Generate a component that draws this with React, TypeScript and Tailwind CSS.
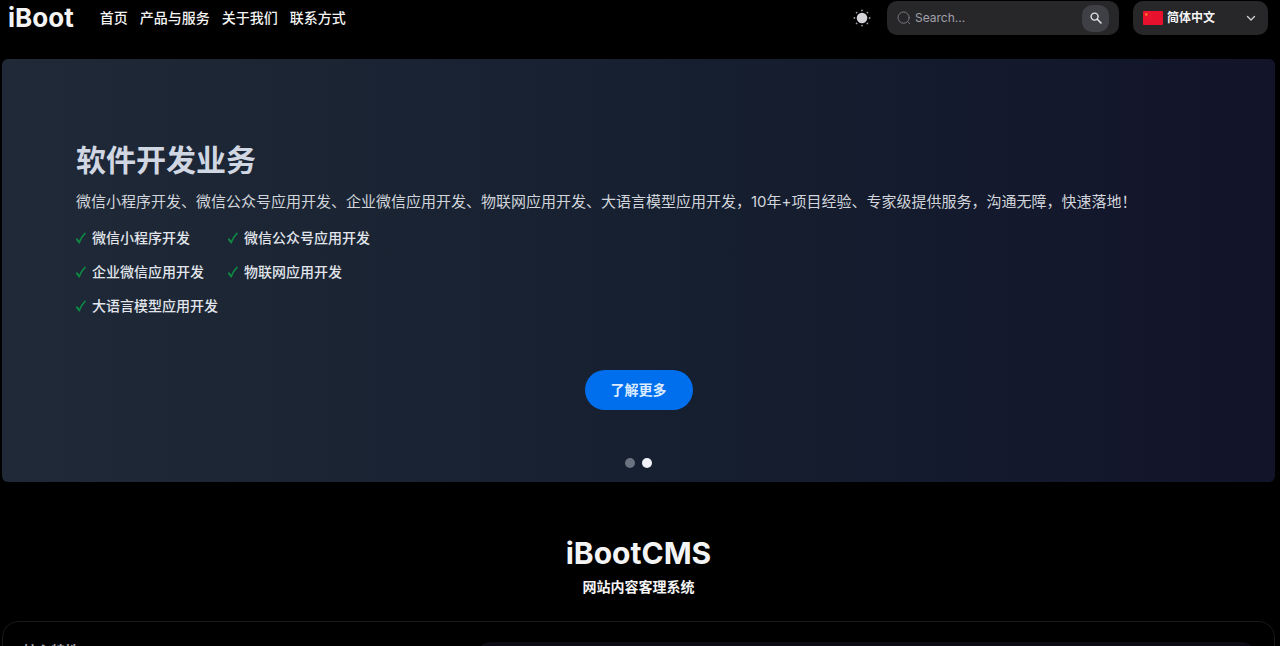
import React from "react";

const navItems = ["首页", "产品与服务", "关于我们", "联系方式"];

const services = [
  "微信小程序开发",
  "微信公众号应用开发",
  "企业微信应用开发",
  "物联网应用开发",
  "大语言模型应用开发",
];

function SunIcon() {
  return (
    <svg viewBox="0 0 18 18" className="size-[18px]" aria-hidden="true">
      <circle cx="9" cy="9" r="5.3" fill="#d4d4d8" />
      <g fill="#9c9ca3">
        <circle cx="9" cy="1.4" r="0.9" />
        <circle cx="9" cy="16.6" r="0.9" />
        <circle cx="1.4" cy="9" r="0.9" />
        <circle cx="16.6" cy="9" r="0.9" />
        <circle cx="3.6" cy="3.6" r="0.9" />
        <circle cx="14.4" cy="3.6" r="0.9" />
        <circle cx="3.6" cy="14.4" r="0.9" />
        <circle cx="14.4" cy="14.4" r="0.9" />
      </g>
    </svg>
  );
}

function OutlineSearchIcon() {
  return (
    <svg viewBox="0 0 14 14" className="size-[14px] shrink-0" fill="none" stroke="#77777f" strokeLinecap="round" aria-hidden="true">
      <circle cx="6.6" cy="6.6" r="5.6" />
      <path d="M11.4 11.4 12.6 12.6" />
    </svg>
  );
}

function SearchIcon() {
  return (
    <svg viewBox="0 0 12 12" className="size-3" fill="none" stroke="#e4e4e7" strokeWidth="1.4" strokeLinecap="round" aria-hidden="true">
      <circle cx="4.6" cy="4.6" r="3.5" />
      <path d="M7.3 7.3 11 11" strokeWidth="1.6" />
    </svg>
  );
}

function ChinaFlag() {
  return (
    <svg viewBox="0 0 30 20" className="h-[14px] w-5 shrink-0" preserveAspectRatio="none" aria-hidden="true">
      <rect width="30" height="20" rx="1" fill="#e8112d" />
      <path fill="#ff8a2e" d="M5 2l.7 2.1h2.2L6.1 5.4l.7 2.1L5 6.2 3.2 7.5l.7-2.1-1.8-1.3h2.2z" />
      <g fill="#f0502c">
        <circle cx="10" cy="2" r=".6" />
        <circle cx="12" cy="4" r=".6" />
        <circle cx="12" cy="7" r=".6" />
        <circle cx="10" cy="9" r=".6" />
      </g>
    </svg>
  );
}

function ChevronIcon() {
  return (
    <svg viewBox="0 0 10 10" className="pointer-events-none absolute right-3 size-[10px]" fill="none" stroke="#d4d4d8" strokeWidth="1.3" strokeLinecap="round" strokeLinejoin="round" aria-hidden="true">
      <path d="M1.5 3.5 5 7l3.5-3.5" />
    </svg>
  );
}

function CheckIcon() {
  return (
    <svg viewBox="0 0 10 12" className="h-3 w-[10px] shrink-0" fill="none" stroke="#0f8a45" strokeLinecap="round" strokeLinejoin="round" aria-hidden="true">
      <path d="M1 7.4 3.2 10.4" strokeWidth="2" />
      <path d="M3.2 10.4Q5.2 5.2 9 1.4" strokeWidth="1.5" />
    </svg>
  );
}

function Header() {
  return (
    <header className="flex h-9 items-center pr-3 pl-2">
      <a href="#" className="text-[26px] leading-9 font-bold text-zinc-100">iBoot</a>
      <nav className="ml-[26px] flex gap-3 text-sm font-medium text-zinc-100">
        {navItems.map((item) => (
          <a key={item} href="#" className="whitespace-nowrap">{item}</a>
        ))}
      </nav>
      <div className="ml-auto flex items-center">
        <button type="button" aria-label="切换主题"><SunIcon /></button>
        <form role="search" className="ml-4 flex h-[34px] w-[232px] items-center rounded-[10px] bg-[#27272a] px-[10px]">
          <OutlineSearchIcon />
          <input type="search" aria-label="Search" placeholder="Search..." className="ml-1 min-w-0 flex-1 bg-transparent text-xs text-zinc-200 outline-none placeholder:text-[#a1a1aa]" />
          <button type="button" aria-label="搜索" className="flex size-[27px] items-center justify-center rounded-[10px] bg-[#3f3f46]">
            <SearchIcon />
          </button>
        </form>
        <label className="relative ml-[14px] flex h-[34px] w-[135px] items-center rounded-[10px] bg-[#27272a] pl-[10px]">
          <ChinaFlag />
          <select aria-label="语言" className="h-full min-w-0 flex-1 appearance-none bg-transparent pl-1 text-xs font-bold text-zinc-100 outline-none">
            <option>简体中文</option>
          </select>
          <ChevronIcon />
        </label>
      </div>
    </header>
  );
}

function Hero() {
  return (
    <section className="mt-[23px] mr-[5px] ml-[2px] flex flex-col rounded-md bg-linear-to-r from-[#1f2937] via-[#162030] to-[#12142a] px-[74px] pt-[79px] pb-[14px]">
      <h1 className="text-[30px] leading-[44px] font-bold text-[#d1d7e2]">软件开发业务</h1>
      <p className="mt-2 text-[15px] leading-6 text-[#d1d5db]">
        微信小程序开发、微信公众号应用开发、企业微信应用开发、物联网应用开发、大语言模型应用开发，10年+项目经验、专家级提供服务，沟通无障，快速落地！
      </p>
      <ul className="mt-[14px] grid grid-cols-[152px_auto] justify-start gap-y-[14px] text-sm leading-5 font-medium text-[#e2e6ec]">
        {services.map((service) => (
          <li key={service} className="flex items-center gap-[6px] whitespace-nowrap">
            <CheckIcon />
            {service}
          </li>
        ))}
      </ul>
      <a href="#" className="mt-[54px] flex h-10 w-[108px] items-center justify-center self-center rounded-full bg-[#006fee] text-sm font-bold text-[#dcebff]">
        了解更多
      </a>
      <div className="mt-12 flex justify-center gap-[7px]">
        <button type="button" aria-label="第 1 张" className="size-[10px] rounded-full bg-[#6b7280]" />
        <button type="button" aria-label="第 2 张" aria-current="true" className="size-[10px] rounded-full bg-[#f1f3f8]" />
      </div>
    </section>
  );
}

export default function App() {
  return (
    <div className="h-screen overflow-hidden bg-black font-['Inter','Noto_Sans_CJK_SC',sans-serif]">
      <Header />
      <Hero />
      <section className="mt-[51px] mr-[5px] ml-[2px] text-center text-zinc-100">
        <h2 className="text-3xl leading-10 font-bold">iBootCMS</h2>
        <p className="mt-1 text-sm leading-5 font-bold">网站内容客理系统</p>
      </section>
      <section className="mt-6 mr-[5px] ml-[2px] flex rounded-2xl border border-[#18181f] px-5 pt-5 pb-8">
        <h3 className="w-[455px] text-sm leading-[18px] font-bold text-zinc-400">核心特性</h3>
        <div className="h-40 flex-1 rounded-xl bg-[#0d0c14]" />
      </section>
    </div>
  );
}
